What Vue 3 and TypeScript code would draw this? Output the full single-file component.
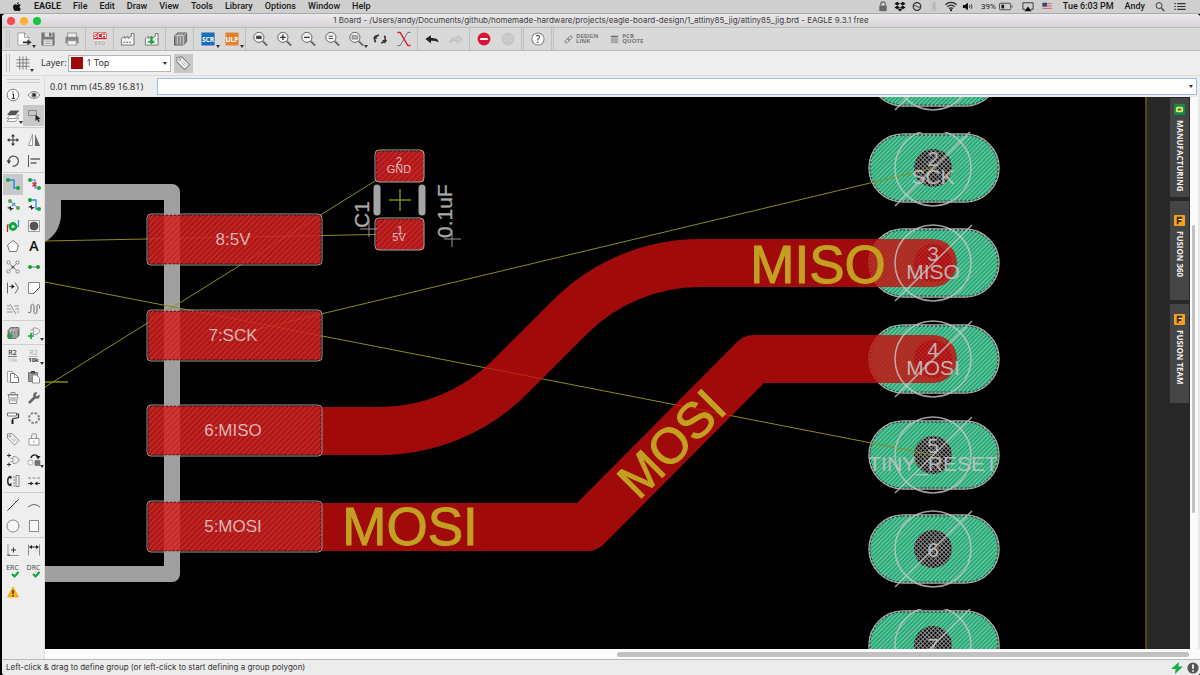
<script setup lang="ts">
import { ref } from 'vue'

interface Tool {
  name: string
  art: string
  menu?: boolean
  pressed?: boolean
}

const menus: string[] = ['File', 'Edit', 'Draw', 'View', 'Tools', 'Library', 'Options', 'Window', 'Help']

const G = '#0aa83a'
const B = '#2b8ce6'

const lens = (inner: string): string =>
  `<circle cx="9" cy="8.500" r="4.600" fill="#f2f2f2" stroke="#666" stroke-width=".9"/><path d="M12.500 12l4 4" stroke="#666" stroke-width="1.700"/>${inner}`
const factory = '<path d="M4 15.500V9.500l3-2v2l3-2v2l3-2V5h2.500v10.500z" fill="#f4f4f4" stroke="#777" stroke-width=".9"/><path d="M6 13h1.500M8.500 13h1.500M11 13h1.500" stroke="#555"/>'
const books = '<path d="M5 7l3-2.500h8v8l-3 3H5z" fill="#888" stroke="#555" stroke-width=".8"/><path d="M7.500 7v8.500M10.200 7v8.500M13 7v8.500M5 7h8l3-2.500M7.500 7l2.500-2.500M10.200 7l2.500-2.500" stroke="#ddd" stroke-width=".7"/>'
const tag = '<path d="M4.500 5l4.500-.500 7 7-4.500 4.500-7-7z" fill="#f5f5f5" stroke="#888"/><circle cx="7" cy="7" r="1" stroke="#777" stroke-width=".7"/><path d="M8.500 9.500l3.500 3.500M10 8.500l3.500 3.500" stroke="#999" stroke-width=".8"/>'
const dot = (x: number, y: number, c = G): string => `<circle cx="${x}" cy="${y}" r="2" fill="${c}" stroke="none"/>`
const plus = (x: number, y: number, c = G): string => `<path d="M${x - 3} ${y}h6M${x} ${y - 3}v6" stroke="${c}" stroke-width="1.600"/>`

const toolbar: Tool[][] = [
  [
    { name: 'New', menu: true, art: '<path d="M4.500 4.500h6l4 4v7h-10z" fill="#fff" stroke="#999" stroke-width=".8"/><path d="M10.500 4.500v4h4" stroke="#888" stroke-width=".8"/><path d="M9 13h5" stroke="#333" stroke-width="1.500"/><path d="M13 10.500l4 2.500-4 2.500z" fill="#333" stroke="none"/>' },
    { name: 'Save', art: '<path d="M4.500 4.500h11v11h-11z" fill="#777" stroke="#777"/><path d="M7 4h7v4H7z" fill="#ddd" stroke="none"/><path d="M11 4.500h2v3h-2z" fill="#666" stroke="none"/><path d="M6 10.500h8v5H6z" fill="#e8e8e8" stroke="none"/><path d="M7 12h6M7 14h6" stroke="#999" stroke-width=".8"/>' },
    { name: 'Print', art: '<path d="M6 4.500h8V9H6z" fill="#eee" stroke="#999"/><path d="M4.500 8.500h11v5h-11z" fill="#888" stroke="#888"/><path d="M6 11.500h8v4H6z" fill="#f4f4f4" stroke="#999"/>' }
  ],
  [{ name: 'Schematic', art: '<path d="M4 4h12v6.500H4z" fill="#d8232a" stroke="none"/><path d="M4 10.500h12V16H4z" fill="#eee" stroke="#ccc" stroke-width=".5"/><text x="10" y="9.500" font-size="6" font-weight="700" fill="#fff">SCH</text><text x="10" y="15.500" font-size="5" font-weight="700" fill="#aaa">BRD</text>' }],
  [
    { name: 'Manufacturing', art: factory },
    { name: 'Export', art: factory + `<path d="M9.500 8v5" stroke="${G}" stroke-width="2"/><path d="M6.500 11.500h6l-3 3.500z" fill="${G}" stroke="none"/>` }
  ],
  [{ name: 'Library manager', art: books }],
  [
    { name: 'Run script', menu: true, art: '<path d="M4 4h12v12H4z" fill="#1b6fb8" stroke="none"/><text x="10" y="12.500" font-size="6" font-weight="700" fill="#fff">SCR</text>' },
    { name: 'Run ULP', menu: true, art: '<path d="M4 4h12v12H4z" fill="#e08332" stroke="none"/><text x="10" y="12.500" font-size="6" font-weight="700" fill="#fff">ULP</text>' }
  ],
  [
    { name: 'Zoom to fit', art: lens('<path d="M6.500 7h5v3h-5z" fill="#444" stroke="none"/>') },
    { name: 'Zoom in', art: lens('<path d="M6.500 8.500h5M9 6v5" stroke="#333" stroke-width="1.200"/>') },
    { name: 'Zoom out', art: lens('<path d="M6.500 8.500h5" stroke="#333" stroke-width="1.200"/>') },
    { name: 'Redraw', art: lens('<path d="M7 7.500h4M7 9.500h4" stroke="#555"/>') },
    { name: 'Zoom select', menu: true, art: lens('<path d="M6.500 7h5v3h-5z" fill="#bbb" stroke="#777" stroke-width=".8"/>') },
    { name: 'Refresh', art: '<path d="M6 13c-2-3.500-.500-6 3-6.500M14 7c2 3.500.500 6-3 6.500" stroke="#333" stroke-width="1.500"/><path d="M3.500 9.500l2-3 2.500 3zM16.500 11l-2 3-2.500-3z" fill="#333" stroke="none"/>' },
    { name: 'Switch wires', art: '<path d="M4 4h2.500l7 12H16" stroke="#d8232a" stroke-width="1.400"/><path d="M16 4h-2.500l-7 12H4" stroke="#666" stroke-width=".8"/>' }
  ],
  [
    { name: 'Undo', art: '<path d="M4 10l5-3.500v2.500c4 0 6.500.500 7 4-2-1.500-4-1.500-7-1.500v2.500z" fill="#222" stroke="none"/>' },
    { name: 'Redo', art: '<path d="M16 10l-5-3.500v2.500c-4 0-6.500.500-7 4 2-1.500 4-1.500 7-1.500v2.500z" fill="#ccc" stroke="#bbb" stroke-width=".7"/>' }
  ],
  [
    { name: 'Stop', art: '<circle cx="10" cy="10" r="5.800" fill="#dc1431" stroke="none"/><path d="M6.500 10h7" stroke="#fff" stroke-width="2"/>' },
    { name: 'Go', art: '<circle cx="10" cy="10" r="5.800" fill="#c6c6c6" stroke="none"/><text x="10" y="12" font-size="6" fill="#d9d9d9">GO</text>' }
  ],
  [{ name: 'Help', art: '<circle cx="10" cy="10" r="5.500" fill="#fff" stroke="#888"/><text x="10" y="13.500" font-size="9" font-weight="600" fill="#444">?</text>' }]
]

const sideGroups: Tool[][] = [
  [
    { name: 'Info', art: '<circle cx="10" cy="10" r="5.800" fill="#fff" stroke="#777" stroke-width=".9"/><path d="M9 9h1.500v4M8.500 13.300h3.500M10 6.300v1.400" stroke="#333"/>' },
    { name: 'Show', art: '<path d="M4 10q6-7 12 0-6 7-12 0z" fill="#fff" stroke="#777" stroke-width=".9"/><circle cx="10" cy="10" r="2.600" fill="#777" stroke="none"/><circle cx="10" cy="10" r="1.200" fill="#222" stroke="none"/>' },
    { name: 'Layers', menu: true, art: '<path d="M4 15.500l3-3.500h9l-4 3.500z" fill="#fff" stroke="#888" stroke-width=".8"/><path d="M4 12.500L7 9h9l-4 3.500z" fill="#fff" stroke="#888" stroke-width=".8"/><path d="M4 9l3.500-4.500h9l-4 4.500z" fill="#555" stroke="none"/>' },
    { name: 'Group', pressed: true, art: '<path d="M4.500 4.500h8v5h-8z" stroke="#888"/><path d="M11.500 8.500v6.500l1.700-1.500 1.200 2.500 1.300-.600-1.200-2.400h2.200z" fill="#222" stroke="none"/>' }
  ],
  [
    { name: 'Move', art: '<path d="M5 10h10M10 5v10" stroke="#333"/><path d="M4 10l2.500-2v4zM16 10l-2.500-2v4zM10 4L8 6.500h4zM10 16l-2-2.500h4z" fill="#333" stroke="none"/>' },
    { name: 'Mirror', art: '<path d="M8.500 4.500v11h-4z" fill="#fff" stroke="#888" stroke-width=".8"/><path d="M11 4v12h5z" fill="#666" stroke="none"/>' },
    { name: 'Rotate', art: '<path d="M5.500 11a5 5 0 1 1 4 4" stroke-width="1.200"/><path d="M3.500 9.500h4.500l-2 3.500z" fill="#333" stroke="none"/>' },
    { name: 'Align', art: '<path d="M4.500 4v12"/><path d="M6.500 8H16M6.500 12h6" stroke="#888" stroke-width="2"/>' }
  ],
  [
    { name: 'Route', pressed: true, art: `<path d="M5 6h6v8h4" stroke="${B}" stroke-width="1.500"/>${dot(5, 6)}${dot(15, 14)}` },
    { name: 'Ripup', art: `<path d="M5 6h6v8h4" stroke="${B}" stroke-width="1.200"/>${dot(6, 6)}${dot(15, 14)}<path d="M8.500 8.500l4 4M12.500 8.500l-4 4" stroke="#e01b24" stroke-width="1.300"/>` },
    { name: 'Route multiple', art: `<path d="M7 6l8 7" stroke="${B}"/><path d="M9 11l3-3" stroke="${B}" stroke-width="1.500"/>${dot(7, 6, '#5fa83c')}${dot(15, 13, '#5fa83c')}<path d="M4 13l4-2v2h3l-4 3v-2z" fill="#333" stroke="none"/>` },
    { name: 'Quick route', art: `<path d="M6 5h6v9h3" stroke="${B}" stroke-width="1.300"/>${dot(6, 5)}${dot(15, 14)}<path d="M4 12l4-2v2h3l-4 3v-2z" fill="#333" stroke="none"/>` },
    { name: 'Via', art: `<path d="M4.500 16v-7H8" stroke="#d01f1f" stroke-width="1.200"/><path d="M15.500 4v6.500H12" stroke="${B}" stroke-width="1.200"/><circle cx="10" cy="10.500" r="3" stroke="${G}" stroke-width="2.800"/>` },
    { name: 'Hole', art: '<path d="M4.500 4.500h11v11h-11z" fill="#f4f4f4" stroke="#999"/><circle cx="10" cy="10" r="4" fill="#555" stroke="#555"/>' },
    { name: 'Polygon', art: '<path d="M10 4.500l5.500 4.500-2 6.500h-7L4.500 9z" fill="#fff" stroke="#777"/>' },
    { name: 'Text', art: '<text x="10" y="15" font-size="14" font-weight="600" fill="#111">A</text>' },
    { name: 'Ratsnest', art: '<path d="M6 6l8 8M14 6l-8 8" stroke="#888"/><g fill="#fff" stroke="#777" stroke-width=".9"><circle cx="5.500" cy="5.500" r="1.600"/><circle cx="14.500" cy="5.500" r="1.600"/><circle cx="5.500" cy="14.500" r="1.600"/><circle cx="14.500" cy="14.500" r="1.600"/></g><circle cx="10" cy="10" r="1.500" fill="#666" stroke="none"/>' },
    { name: 'Signal', art: `<path d="M6 10h8" stroke="#777"/>${dot(6, 10)}${dot(14, 10)}` },
    { name: 'Split', art: '<path d="M4.500 4.500v11M12 4.500l3.500 5.500-3.500 5.500M6 8.500h3" stroke="#666"/><path d="M8.500 6v5l3-2.500z" fill="#222" stroke="none"/>' },
    { name: 'Miter', art: '<path d="M4.500 4.500h11v5l-6 6h-5z" fill="#fff" stroke="#888"/><path d="M9 16l7-7" stroke="#444"/>' },
    { name: 'Optimize', art: '<path d="M4 7h3M11 7h5M4 10h4.500M12.500 10H16M4 13h6M14 13h2M7 5l6 10" stroke="#888" stroke-width=".9"/>' },
    { name: 'Meander', art: '<path d="M4 13c3 2 3-1 3-3V7.500c0-3 3-3 3 0v5c0 3 3 3 3 0v-5c0-3 2.500-2.500 2.500 0v2" stroke="#666"/>' }
  ],
  [
    { name: 'Add part', art: books + plus(7, 13) },
    { name: 'Replace', menu: true, art: `<path d="M9 5h3q3 .500 4 3-1 3-4 3.500H9q1.500-3.500 0-6.500zM6.500 7H9M6.500 10H9" stroke="#999" stroke-width=".9"/>${plus(7, 13)}` }
  ],
  [
    { name: 'Name', art: '<text x="9.500" y="9" font-size="7" font-weight="600" fill="#444">R2</text><path d="M5 10.500h9" stroke="#444" stroke-width=".7"/><text x="9.500" y="16" font-size="6" fill="#aaa">10k</text>' },
    { name: 'Value', menu: true, art: '<text x="9.500" y="9" font-size="7" fill="#aaa">R2</text><path d="M5 10.500h9" stroke="#aaa" stroke-width=".7"/><text x="9.500" y="16" font-size="6" font-weight="700" fill="#333">10k</text>' },
    { name: 'Copy', art: '<path d="M4.500 4.500h5V15h-5z" fill="#fff" stroke="#aaa"/><path d="M7.500 6.500h4l4 4v5h-8z" fill="#fff" stroke="#777"/><path d="M11.500 6.500v4h4" stroke="#777" stroke-width=".7"/>' },
    { name: 'Paste', art: '<path d="M4.500 5.500h9v9h-9z" fill="#999" stroke="#777"/><path d="M7 4h4v2.500H7z" fill="#444" stroke="none"/><path d="M8.500 8h4l3 3v5h-7z" fill="#fff" stroke="#777" stroke-width=".8"/>' },
    { name: 'Delete', art: '<path d="M5.500 7h9l-1 8.500h-7z" fill="#fff" stroke="#888"/><path d="M4.500 6.500h11M8 6V4.500h4V6M8 9v4.500M10 9v4.500M12 9v4.500" stroke="#888"/>' },
    { name: 'Change', art: '<path d="M5 15l6-6" stroke="#666" stroke-width="2.500"/><path d="M15.500 6.500l-2.500 2-1.500-1.500 2-2.500c-3-1-5 1-4 4l2 2c3 1 5-1 4-4z" fill="#666" stroke="none"/>' },
    { name: 'Paint', art: '<path d="M4.500 5h9v3h-9z" fill="#fff" stroke="#777"/><path d="M13.500 6h2v3.500L9.500 11v2" stroke="#333" stroke-width="1.200"/><path d="M9.500 12v4" stroke="#222" stroke-width="2"/>' },
    { name: 'Array', art: '<circle cx="10" cy="10" r="5" stroke="#888" stroke-width="2" stroke-dasharray="2.500 1.427"/>' },
    { name: 'Attribute', art: tag },
    { name: 'Lock', art: '<path d="M5 9.500h10v6.500H5z" fill="#fff" stroke="#999"/><path d="M7.500 9V7a2.500 2.500 0 0 1 5 0v2M10 11.500v2.500" stroke="#999"/>' },
    { name: 'Gate swap', art: '<path d="M10 6.500h2q3 .500 4 3.500-1 3-4 3.500h-2zM7.500 8.500H10M7.500 11.500H10M16 10h1" stroke="#999" stroke-width=".9"/><path d="M4 5.500h4M6 3.500v4M4 14.500h4M6 12.500v4" stroke="#333"/>' },
    { name: 'Replace package', menu: true, art: '<path d="M7 8c1-4 6-4 7-1" stroke="#222" stroke-width="1.400"/><path d="M12 6h4.500L14 9.500z" fill="#222" stroke="none"/><circle cx="6.500" cy="12.500" r="2.600" fill="#fff" stroke="#999" stroke-width=".8"/><path d="M11 10.500h5v5h-5z" fill="#777" stroke="#666" stroke-width=".6"/>' },
    { name: 'Pin swap', art: '<path d="M7 5.500c-3 1-3 8 0 9" stroke="#222" stroke-width="1.400"/><path d="M5 6.500l3.500-2v3.500zM5 13.500l3.500 2V12z" fill="#222" stroke="none"/><path d="M13 4.500h3v11h-3zM10 6h2M10 9h2M10 12h2M10 15h2" stroke="#777" stroke-width=".9"/>' },
    { name: 'Slice', art: '<path d="M4 7h3M8.500 7h3M13 7h3" stroke="#888"/><path d="M4 12.500h3M16 12.500h-3" stroke="#333"/><path d="M9.500 12.500l-3-2v4zM10.500 12.500l3-2v4z" fill="#222" stroke="none"/>' }
  ],
  [
    { name: 'Line', art: '<path d="M4.500 15.500l11-11" stroke="#333"/>' },
    { name: 'Arc', art: '<path d="M4 12q6-5 12 0" stroke="#666"/>' },
    { name: 'Circle', art: '<circle cx="10" cy="10" r="6" fill="#f6f6f6" stroke="#888"/>' },
    { name: 'Rectangle', art: '<path d="M5.500 4.500h9v11h-9z" fill="#f6f6f6" stroke="#888"/>' }
  ],
  [
    { name: 'Mark', art: '<path d="M5 4v10M5 15.500h11" stroke="#999"/><path d="M4 15h3" stroke="#444"/><path d="M8 10h5M10.500 7.500v5" stroke="#333"/>' },
    { name: 'Dimension', art: '<path d="M4.500 4.500v11M15.500 4.500v11" stroke="#888"/><path d="M6 7h8" stroke="#222"/><path d="M5 7l3-2v4zM15 7l-3-2v4z" fill="#222" stroke="none"/>' },
    { name: 'ERC', art: `<text x="9.500" y="9" font-size="7" fill="#444">ERC</text><path d="M9 13l2.500 2.500L15.500 11" stroke="${G}" stroke-width="2"/>` },
    { name: 'DRC', art: `<text x="9.500" y="9" font-size="7" fill="#444">DRC</text><path d="M9 13l2.500 2.500L15.500 11" stroke="${G}" stroke-width="2"/>` },
    { name: 'Errors', art: '<path d="M10 5l5.500 10h-11z" fill="#f6b012" stroke="#f6b012" stroke-linejoin="round"/><path d="M10 8v4M10 13v1.500" stroke="#333" stroke-width="1.500"/>' }
  ]
]

const statusIcons: Tool[] = [
  { name: 'Lock', art: '<path d="M4 6h8v6H4z" fill="#666" stroke="none"/><path d="M5.500 6V4.500a2.500 2.500 0 0 1 5 0V6" stroke="#666" stroke-width="1.300"/>' },
  { name: 'Dropbox', art: '<path d="M5 2l3 2-3 2-3-2zM11 2l3 2-3 2-3-2zM5 6l3 2-3 2-3-2zM11 6l3 2-3 2-3-2zM8 9l2.500 1.500L8 12l-2.500-1.500z" fill="#111" stroke="none"/>' },
  { name: 'Sync', art: '<circle cx="8" cy="7" r="4.200" stroke="#333" stroke-width="1.200"/><path d="M4 7q2-2 4 0t4 0" stroke="#333"/>' },
  { name: 'Bluetooth', art: '<path d="M5.500 4.500l5 5L8 12V2l2.500 2.500-5 5" stroke="#aaa"/>' },
  { name: 'Wi-Fi', art: '<path d="M2 5q6-5 12 0M4 7.200q4-3.200 8 0M5.800 9.200q2.200-1.600 4.400 0" stroke="#222" stroke-width="1.400"/><circle cx="8" cy="11" r="1.200" fill="#222" stroke="none"/>' },
  { name: 'Volume', art: '<path d="M2.500 5.500h2L8 3v8L4.500 8.500h-2z" fill="#111" stroke="none"/><path d="M9.500 5.500q1 1.500 0 3M11.500 4.500q1.500 2.500 0 5" stroke="#333"/>' }
]

const layers = ['1 Top', '16 Bottom', '17 Pads']
const layer = ref('1 Top')
const command = ref('')

interface Hole { n: string; name: string; y: number; clip?: string }
const holes: Hole[] = [
  { n: '', name: '', y: 72 },
  { n: '2', name: 'SCK', y: 168, clip: 'url(#clip-a)' },
  { n: '3', name: 'MISO', y: 263 },
  { n: '4', name: 'MOSI', y: 359 },
  { n: '5', name: 'TINY_RESET', y: 455 },
  { n: '6', name: '', y: 549 },
  { n: '7', name: '', y: 645, clip: 'url(#clip-b)' }
]
const labelled = holes.filter(h => h.n)
const pins = [
  { label: '8:5V', y: 214 },
  { label: '7:SCK', y: 310 },
  { label: '6:MISO', y: 405 },
  { label: '5:MOSI', y: 501 }
]
const sideTabs = ['MANUFACTURING', 'FUSION 360', 'FUSION TEAM']
</script>

<template>
  <div class="desktop">
    <header class="menubar">
      <svg class="apple" viewBox="0 0 10 12" aria-label="Apple"><path d="M7 1c0 1.500-1 2.300-2 2.300C5 2 6 1.200 7 1zM5 4c.800 0 1.200-.500 2-.500 1 0 1.700.500 2 1-1.700 1-1.500 3.300.200 4C8.700 10 8 11 7 11c-.800 0-1-.400-1.800-.400S4.200 11 3.500 11C2 11 .700 8.500.700 6.500.700 4.500 2 3.500 3.200 3.500 4 3.500 4.500 4 5 4z" fill="#111" /></svg>
      <nav class="menus">
        <button type="button" class="app-name">EAGLE</button>
        <button v-for="m in menus" :key="m" type="button">{{ m }}</button>
      </nav>
      <div class="tray">
        <svg v-for="s in statusIcons" :key="s.name" class="tray-icon" viewBox="0 0 16 14" :aria-label="s.name" v-html="s.art" />
        <span class="percent">39%</span>
        <svg class="battery" viewBox="0 0 16 14" aria-label="Battery"><rect x="1" y="3.500" width="12" height="7" rx="1" /><path d="M3 5h3v4H3z" fill="#222" stroke="none" /><path d="M14.500 6v2" /></svg>
        <svg class="tray-icon air" viewBox="0 0 16 14" aria-label="AirPlay"><path d="M5 10H2.500V3h11v7H11" stroke="#333" /><path d="M8 7l4 5H4z" fill="#111" stroke="none" /></svg>
        <svg class="tray-icon" viewBox="0 0 16 14" aria-label="Input source"><path d="M3 3h10v7.500H3z" fill="#e8c8c8" stroke="none" /><path d="M3 4h10M3 6.500h10M3 9h10" stroke="#b06a70" /><path d="M3 3h5v4H3z" fill="#3b4470" stroke="none" /></svg>
        <time>Tue 6:03 PM</time>
        <span class="user">Andy</span>
        <svg class="tray-icon" viewBox="0 0 16 14" aria-label="Search"><circle cx="7" cy="6" r="3.200" stroke="#333" /><path d="M9.500 8.500l3 3.500" stroke="#333" stroke-width="1.300" /></svg>
        <svg class="tray-icon list" viewBox="0 0 16 14" aria-label="Notifications"><path d="M5 4h9M5 7h9M5 10h9M2 4h1.500M2 7h1.500M2 10h1.500" stroke="#333" stroke-width="1.300" /></svg>
      </div>
    </header>

    <main class="window">
      <div class="titlebar">
        <div class="lights">
          <button type="button" class="close" aria-label="Close" />
          <button type="button" class="mini" aria-label="Minimize" />
          <button type="button" class="full" aria-label="Zoom" />
        </div>
        <h1>1 Board - /Users/andy/Documents/github/homemade-hardware/projects/eagle-board-design/1_attiny85_jig/attiny85_jig.brd - EAGLE 9.3.1 free</h1>
      </div>

      <div class="toolbar">
        <i class="grip" />
        <div v-for="(g, i) in toolbar" :key="i" class="bar-group">
          <button v-for="t in g" :key="t.name" type="button" class="tool" :class="{ menu: t.menu }" :aria-label="t.name">
            <svg class="icon" viewBox="0 0 20 20" v-html="t.art" />
          </button>
        </div>
        <div class="bar-group links">
          <button type="button" class="service">
            <svg class="small-icon" viewBox="0 0 10 10"><g transform="rotate(-45 5 5)" stroke="#777" fill="none"><rect x="0" y="3.500" width="5.500" height="3" rx="1.500" /><rect x="4.500" y="3.500" width="5.500" height="3" rx="1.500" /></g></svg>
            <span>DESIGN<br>LINK</span>
          </button>
          <button type="button" class="service">
            <svg class="small-icon" viewBox="0 0 10 10"><path d="M1 1h8v8H1z" fill="#bbb" /><path d="M1 1.500h8" stroke="#666" stroke-width="1.500" /><path d="M1 4.500h8M1 6.500h8M1 8.500h8" stroke="#999" /></svg>
            <span>PCB<br>QUOTE</span>
          </button>
        </div>
      </div>

      <div class="params">
        <i class="grip" />
        <button type="button" class="tool menu grid-btn" aria-label="Grid">
          <svg class="icon" viewBox="0 0 20 20"><path d="M7 4v12M10 4v12M13 4v12M4 7h12M4 10h12M4 13h12" stroke="#777" stroke-width=".8" /></svg>
        </button>
        <label for="layer">Layer:</label>
        <div class="layer-box">
          <i class="swatch" />
          <select id="layer" v-model="layer">
            <option v-for="l in layers" :key="l">{{ l }}</option>
          </select>
          <i class="caret" />
        </div>
        <button type="button" class="tag-btn" aria-label="Layer tags"><svg class="icon" viewBox="0 0 20 20" v-html="tag" /></button>
      </div>

      <div class="work">
        <aside class="side">
          <i class="side-grip" />
          <div v-for="(g, i) in sideGroups" :key="i" class="side-group" :class="{ tall: g.length === 14 }">
            <button v-for="t in g" :key="t.name" type="button" class="side-tool" :class="{ menu: t.menu, pressed: t.pressed }" :aria-label="t.name">
              <svg class="icon" viewBox="0 0 20 20" v-html="t.art" />
            </button>
          </div>
        </aside>

        <section class="editor">
          <div class="command">
            <label for="cmd">0.01 mm (45.89 16.81)</label>
            <div class="cmd-box"><input id="cmd" v-model="command" type="text"><i class="caret" /></div>
          </div>

          <div class="stage">
            <svg class="board" viewBox="45 97 1102 552" preserveAspectRatio="xMinYMin slice" role="img" aria-label="Board layout">
              <defs>
                <pattern id="hatch-green" width="3" height="3" patternUnits="userSpaceOnUse" patternTransform="rotate(45)">
                  <rect width="3" height="3" fill="#1bb078" /><rect width="1" height="3" fill="#93bfa9" />
                </pattern>
                <pattern id="hatch-hole" width="3" height="3" patternUnits="userSpaceOnUse" patternTransform="rotate(45)">
                  <rect width="3" height="3" fill="#050505" /><path d="M0 .500h3M.500 0v3" stroke="#979797" stroke-width=".9" />
                </pattern>
                <pattern id="hatch-red" width="4" height="4" patternUnits="userSpaceOnUse" patternTransform="rotate(45)">
                  <rect width="1" height="4" fill="#e87070" fill-opacity=".3" />
                </pattern>
                <clipPath id="clip-a"><rect x="860" y="132" width="150" height="100" /></clipPath>
                <clipPath id="clip-b"><rect x="860" y="609" width="150" height="100" /></clipPath>
                <clipPath id="clip-trace"><rect x="321" y="97" width="700" height="552" /></clipPath>
              </defs>
              <rect x="45" y="97" width="1400" height="900" fill="#000" />

              <path d="M30 192H172V574H30" fill="none" stroke="#a0a0a0" stroke-width="16" stroke-linejoin="round" />
              <path d="M45 199H61V215Q60 233 45 242z" fill="#a0a0a0" />

              <g v-for="h in holes" :key="'p' + h.y">
                <rect x="869" :y="h.y - 34" width="130" height="68" rx="34" fill="url(#hatch-green)" stroke="#aaa" stroke-width="1.500" />
                <rect x="870" :y="h.y - 33" width="128" height="66" rx="33" fill="none" stroke="#222" stroke-width="1" stroke-dasharray="2 2" />
                <circle v-if="h.n" cx="933" :cy="h.y" r="19" fill="url(#hatch-hole)" />
              </g>

              <g stroke="#8c8c1e" stroke-width="1" fill="none">
                <path d="M45 241L399 234M399 166L45 387M45 282L933 455M233 335L933 168" />
                <path d="M45 382h23" stroke="#7c8a10" stroke-width="1.500" />
              </g>

              <g fill="none" stroke="#c80c0c" stroke-opacity=".8" stroke-width="48" stroke-linecap="round" stroke-linejoin="round" clip-path="url(#clip-trace)">
                <path d="M280 431H380A184 184 0 0 0 510 377L570 317A184 184 0 0 1 700 263H933" />
                <path d="M280 527H587L754 359H933" />
              </g>

              <g v-for="p in pins" :key="p.label">
                <rect x="148" :y="p.y + 1" width="173" height="49" rx="2" fill="#cd1a1a" fill-opacity=".87" />
                <rect x="148" :y="p.y + 1" width="173" height="49" rx="2" fill="url(#hatch-red)" />
                <rect x="148" :y="p.y + 1" width="173" height="49" rx="2" fill="none" stroke="#300" stroke-dasharray="2 2" />
                <rect x="147" :y="p.y" width="175" height="51" rx="4" fill="none" stroke="#999" />
                <text class="pin" x="233" :y="p.y + 31">{{ p.label }}</text>
              </g>

              <g v-for="y in [150, 218]" :key="y">
                <rect x="376" :y="y + 1" width="48" height="31" rx="2" fill="#b41717" />
                <rect x="376" :y="y + 1" width="48" height="31" rx="2" fill="url(#hatch-red)" stroke="#300" stroke-dasharray="2 2" />
                <rect x="375" :y="y" width="49" height="32" rx="4" fill="none" stroke="#aaa" />
              </g>
              <path d="M377 188v24M422 188v24" stroke="#a4a4a4" stroke-width="7" stroke-linecap="round" />
              <path d="M389 200h22M400 189v22" stroke="#6f8a14" stroke-width="1.500" />
              <g class="tiny"><text x="399" y="165">2</text><text x="399" y="173">GND</text><text x="400" y="234">1</text><text x="399" y="241">5V</text></g>
              <g class="silk"><text transform="translate(369 228) rotate(-90)">C1</text><text transform="translate(452 238) rotate(-90)">0.1uF</text></g>
              <path d="M360 229h17M369 220v17M444 239h17M452 230v17" stroke="#999" />

              <g fill="none" stroke="#c4c8c6" stroke-opacity=".8" stroke-width="1.500">
                <g v-for="h in holes" :key="'c' + h.y" :clip-path="h.clip">
                  <circle cx="933" :cy="h.y" r="38" /><path :d="`M895 ${h.y + 38}L972 ${h.y - 38}`" />
                </g>
              </g>
              <g v-for="h in labelled" :key="'t' + h.n" class="hole">
                <text x="933" :y="h.name ? h.y - 2 : h.y + 8">{{ h.n }}</text>
                <text v-if="h.name" x="933" :y="h.y + 16">{{ h.name }}</text>
              </g>

              <g class="net">
                <text x="818" y="283">MISO</text>
                <text x="410" y="545">MOSI</text>
                <text class="slanted" transform="translate(671 443) rotate(-45)" y="18">MOSI</text>
              </g>
              <path d="M1146 97V1000" stroke="#b08a1e" stroke-width="1" />
            </svg>

            <aside class="dock">
              <button v-for="(t, i) in sideTabs" :key="t" type="button" class="dock-tab">
                <svg class="dock-icon" viewBox="0 0 12 12">
                  <template v-if="i === 0"><rect width="12" height="12" rx="1" fill="#168a40" /><rect x="3" y="4" width="6" height="4" rx="1" fill="none" stroke="#f0e070" stroke-width="2" /></template>
                  <template v-else><rect width="12" height="12" rx="1" fill="#f5a01e" /><path d="M4 10V3h5M4 6.500h4" stroke="#443018" stroke-width="2" fill="none" /><path d="M5 5h4" stroke="#fff" stroke-width=".8" /></template>
                </svg>
                <span>{{ t }}</span>
              </button>
            </aside>
            <div class="vscroll"><i /></div>
          </div>
          <div class="hscroll"><i /></div>
        </section>
      </div>

      <footer class="status">
        <span>Left-click &amp; drag to define group (or left-click to start defining a group polygon)</span>
        <svg class="bolt" viewBox="0 0 12 12"><path d="M8 0L0 7h4.500L4 12l8-7.500H7.500z" fill="#14b04a" /></svg>
        <svg class="alert" viewBox="0 0 14 14"><circle cx="7" cy="7" r="6.500" fill="#555" /><path d="M7 3v5M7 9.500v2" stroke="#fff" stroke-width="2" /></svg>
      </footer>
    </main>
  </div>
</template>

<style>
html, body, #app { height: 100%; }
body { margin: 0; overflow: hidden; }
.icon text { font-family: "Open Sans", sans-serif; text-anchor: middle; stroke: none; }
</style>

<style scoped>
.desktop { height: 100vh; display: flex; flex-direction: column; background: #000; color: #333; font: 9px/12px "Noto Sans", sans-serif; }
button { border: 0; padding: 0; margin: 0; background: none; font: inherit; color: inherit; display: flex; align-items: center; justify-content: center; }
svg { display: block; flex: none; fill: none; }

.menubar { height: 14px; box-sizing: border-box; border-bottom: 1px solid #aaa; background: #cfcfcf; display: flex; align-items: center; font: 500 9px/13px Roboto, sans-serif; color: #1a1a1a; flex: none; }
.apple { width: 10px; height: 11px; margin-left: 12px; }
.menus { display: flex; gap: 12px; margin-left: 12px; }
.app-name { font-weight: 700; }
.tray { display: flex; align-items: center; margin-left: auto; padding-right: 11px; white-space: nowrap; }
.tray-icon { width: 16px; height: 13px; margin-right: 1px; }
.percent { font-size: 8px; font-weight: 400; margin-left: 4px; }
.battery { width: 16px; height: 13px; margin: 0 6px 0 2px; stroke: #444; }
.tray-icon.air { margin-right: 3px; }
time { margin-left: 7px; }
.user { margin: 0 7px 0 11px; }
.tray-icon.list { margin-left: 3px; }

.window { flex: 1; min-height: 0; margin-left: 2px; border-radius: 4px 4px 3px 3px; background: #ececec; overflow: hidden; display: flex; flex-direction: column; }
.titlebar { height: 14px; flex: none; background: linear-gradient(#ebe9eb, #d6d4d6); border-bottom: 1px solid #bbb; box-sizing: border-box; display: flex; align-items: center; }
.lights { display: flex; gap: 5px; margin-left: 5px; width: 60px; }
.lights button { width: 8px; height: 8px; border-radius: 50%; }
.close { background: #fb4a4a; }
.mini { background: #fdb12f; }
.full { background: #14c63c; }
h1 { flex: 1; margin: 0 65px 0 0; text-align: center; font: 400 8px/13px Inter, sans-serif; color: #3c3c3c; white-space: nowrap; }

.toolbar { height: 23px; flex: none; box-sizing: border-box; background: #d9d9d9; border-bottom: 1px solid #b8b8b8; display: flex; align-items: stretch; padding-left: 4px; }
.grip { width: 2px; margin: 2px 2px 2px 0; border-left: 1px solid #c2c2c2; border-right: 1px solid #c2c2c2; }
.bar-group { display: flex; padding-right: 1px; }
.bar-group + .bar-group { border-left: 1px solid #bfbfbf; padding-left: 2px; }
.bar-group:nth-last-child(2) { border-left: 3px double #bfbfbf; }
.bar-group.links { border-left: 3px double #bfbfbf; padding-left: 10px; gap: 12px; }
.tool { width: 24px; position: relative; }
.icon { width: 20px; height: 20px; stroke: #555; }
.toolbar .icon, .params .icon { width: 22px; height: 22px; }
.menu::after { content: ""; position: absolute; right: 0; bottom: 2px; border: 2px solid transparent; border-top: 3px solid #333; border-bottom: 0; }
.service { gap: 3px; font: 700 6px/5px "Open Sans", sans-serif; color: #777; text-align: left; }
.small-icon { width: 9px; height: 9px; }

.params { height: 25px; flex: none; box-sizing: border-box; border-bottom: 1px solid #dcdcdc; background: #eee; display: flex; align-items: center; padding-left: 4px; }
.params .grip { height: 18px; }
.grid-btn { height: 21px; width: 22px; margin-right: 7px; }
.layer-box { position: relative; display: flex; align-items: center; width: 103px; height: 17px; box-sizing: border-box; margin-left: 1px; border: 1px solid #b5b5b5; background: #fff; }
.swatch { width: 12px; height: 12px; margin-left: 2px; background: #a00a0a; flex: none; }
select { appearance: none; border: 0; background: none; flex: 1; min-width: 0; font: inherit; color: inherit; padding: 0 0 0 4px; outline: 0; }
.caret { position: absolute; right: 3px; top: 6px; border: 2px solid transparent; border-top: 3px solid #333; border-bottom: 0; }
.tag-btn { width: 19px; height: 19px; margin-left: 3px; background: #c8c8c8; }

.work { flex: 1; min-height: 0; display: flex; }
.side { width: 43px; box-sizing: border-box; flex: none; padding: 3px 0 0 1px; background: #eee; border-right: 1px solid #ddd; }
.side-grip { display: block; height: 2px; margin: 0 4px; border: 1px solid #ccc; border-width: 1px 0; }
.side-group { display: grid; grid-template-columns: 20px 21px; grid-auto-rows: minmax(21px, 1fr); box-sizing: border-box; padding: 1px 0 1px; border-bottom: 1px solid #cfcfcf; }
.side-group.tall { height: 148px; grid-auto-rows: 1fr; }
.side-group:last-child { border: 0; }
.side-tool { position: relative; min-height: 0; }
.side-tool .icon { margin: -1px 0; }
.pressed { background: #c8c8c8; }

.editor { flex: 1; min-width: 0; display: flex; flex-direction: column; }
.command { height: 21px; flex: none; display: flex; align-items: center; padding: 0 3px 0 5px; }
.command label { width: 107px; flex: none; white-space: nowrap; }
.cmd-box { flex: 1; position: relative; height: 17px; box-sizing: border-box; border: 1px solid #9dbfe8; background: #fff; display: flex; }
input { flex: 1; border: 0; padding: 0 4px; outline: 0; font: inherit; background: none; }
.stage { flex: 1; min-height: 0; display: flex; background: #000; }
.board { flex: 1; min-width: 0; height: 100%; font-family: "Liberation Sans", Arial, sans-serif; }
.board text { text-anchor: middle; }
.pin { font-size: 17px; fill: #dcb4b4; }
.tiny { font-size: 11px; fill: #e0bcbc; }
.board .silk text { font-size: 21px; fill: #a8a8a8; stroke: #a8a8a8; stroke-width: .3px; text-anchor: start; }
.hole { font-size: 21px; fill: #c4c4c4; fill-opacity: .9; }
.net { font-size: 53px; fill: #c2a020; stroke: #c2a020; stroke-width: 1px; }
.slanted { font-size: 50px; }

.dock { width: 43px; box-sizing: border-box; flex: none; background: #282828; padding: 1px 1px 0 23px; display: flex; flex-direction: column; gap: 4px; }
.dock-tab { width: 19px; height: 99px; box-sizing: border-box; flex-direction: column; gap: 5px; background: #454545; color: #f0f0f0; font: 700 8px/12px "Open Sans", sans-serif; }
.dock-tab + .dock-tab { padding-bottom: 8px; }
.dock-tab span { writing-mode: vertical-rl; white-space: nowrap; }
.dock-icon { width: 11px; height: 11px; }
.vscroll { width: 10px; box-sizing: border-box; flex: none; background: #fafafa; padding: 128px 3px 0 2px; border-right: 2px solid #e8e8e8; }
.vscroll i { display: block; height: 288px; border-radius: 3px; background: #c1c1c1; }
.hscroll { height: 10px; flex: none; box-sizing: border-box; background: #fbfbfb; padding: 3px 11px 0 0; }
.hscroll i { display: block; height: 5px; width: 50%; margin-left: auto; border-radius: 3px; background: #c1c1c1; }

.status { height: 16px; flex: none; box-sizing: border-box; border-top: 1px solid #b8b8b8; background: #ececec; display: flex; align-items: center; padding: 0 1px 0 4px; }
.status span { flex: 1; font: 400 8px/13px Inter, sans-serif; }
.bolt { width: 12px; height: 12px; margin-right: 4px; }
.alert { width: 12px; height: 12px; }
</style>
